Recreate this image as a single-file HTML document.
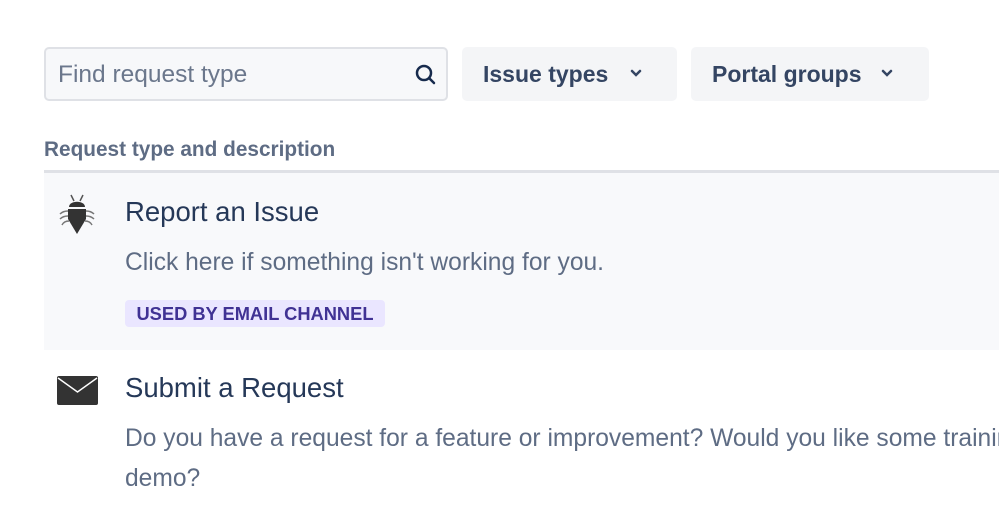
<!DOCTYPE html>
<html><head><style>
body{margin:0;width:999px;height:530px;background:#fff;font-family:"Liberation Sans",sans-serif;overflow:hidden;position:relative}
.abs{position:absolute}
.search{left:44px;top:47px;width:400px;height:50px;border:2px solid #dfe1e6;border-radius:5px;background:#f7f8fa}
.search span{position:absolute;left:12px;top:12px;font-size:24.5px;color:#6b778c}
.btn{top:47px;height:54px;background:#f4f5f7;border-radius:5px;font-size:23px;color:#344563;font-weight:bold}
.btn span{position:absolute;left:21px;top:14px}
.h{left:44px;top:138px;font-size:20.8px;font-weight:bold;color:#5e6c84}
.sep{left:44px;top:170px;width:955px;height:3px;background:#dfe1e6}
.row1{left:44px;top:173px;width:955px;height:177px;background:#f8f9fb}
.t{font-size:27.5px;color:#253858}
.d{font-size:24.6px;color:#5e6c84;line-height:40px}
.badge{left:125px;top:300px;width:260px;height:27px;background:#eae6ff;border-radius:4px;color:#403294;font-weight:bold;font-size:18.3px;text-align:center;line-height:28px}
</style></head><body>
<div class="abs search"><span>Find request type</span>
<svg class="abs" style="left:368px;top:14px" width="24" height="24" viewBox="0 0 24 24"><circle cx="10" cy="10" r="7" fill="none" stroke="#172b4d" stroke-width="2.5"/><path d="M15 15l5 5" stroke="#172b4d" stroke-width="2.5" stroke-linecap="round"/></svg></div>
<div class="abs btn" style="left:462px;width:215px"><span>Issue types</span>
<svg class="abs" style="left:168px;top:22px" width="12" height="10" viewBox="0 0 12 10"><path d="M2 2l4 4 4-4" fill="none" stroke="#344563" stroke-width="2.5" stroke-linecap="round"/></svg></div>
<div class="abs btn" style="left:691px;width:238px"><span>Portal groups</span>
<svg class="abs" style="left:190px;top:22px" width="12" height="10" viewBox="0 0 12 10"><path d="M2 2l4 4 4-4" fill="none" stroke="#344563" stroke-width="2.5" stroke-linecap="round"/></svg></div>
<div class="abs h">Request type and description</div>
<div class="abs sep"></div>
<div class="abs row1"></div>
<svg class="abs" style="left:58px;top:193px" width="38" height="42" viewBox="0 0 38 42">
<path d="M13 2l3 6M25 2l-3 6" stroke="#555" stroke-width="1.5" fill="none"/>
<path d="M11 14c0-7 16-7 16 0z" fill="#333"/>
<path d="M10 16h18v10l-9 15-9-15z" fill="#333"/>
<g stroke="#777" stroke-width="1.5" fill="none"><path d="M10 18c-4 0-6 1-8 3M28 18c4 0 6 1 8 3M10 23c-4 0-6 1-8 3M28 23c4 0 6 1 8 3M11 28c-4 0-6 2-7 4M27 28c4 0 6 2 7 4"/></g>
</svg>
<div class="abs t" style="left:125px;top:196px">Report an Issue</div>
<div class="abs d" style="left:125px;top:243px">Click here if something isn't working for you.</div>
<div class="abs badge">USED BY EMAIL CHANNEL</div>
<svg class="abs" style="left:57px;top:376px" width="41" height="29" viewBox="0 0 41 29"><rect width="41" height="29" rx="2" fill="#333"/><path d="M1 2l19.5 14L40 2" fill="none" stroke="#fff" stroke-width="1.5"/></svg>
<div class="abs t" style="left:125px;top:372px">Submit a Request</div>
<div class="abs d" style="left:125px;top:419px;width:874px;height:80px;overflow:hidden;white-space:nowrap">Do you have a request for a feature or improvement? Would you like some training or a<br>demo?</div>
</body></html>
